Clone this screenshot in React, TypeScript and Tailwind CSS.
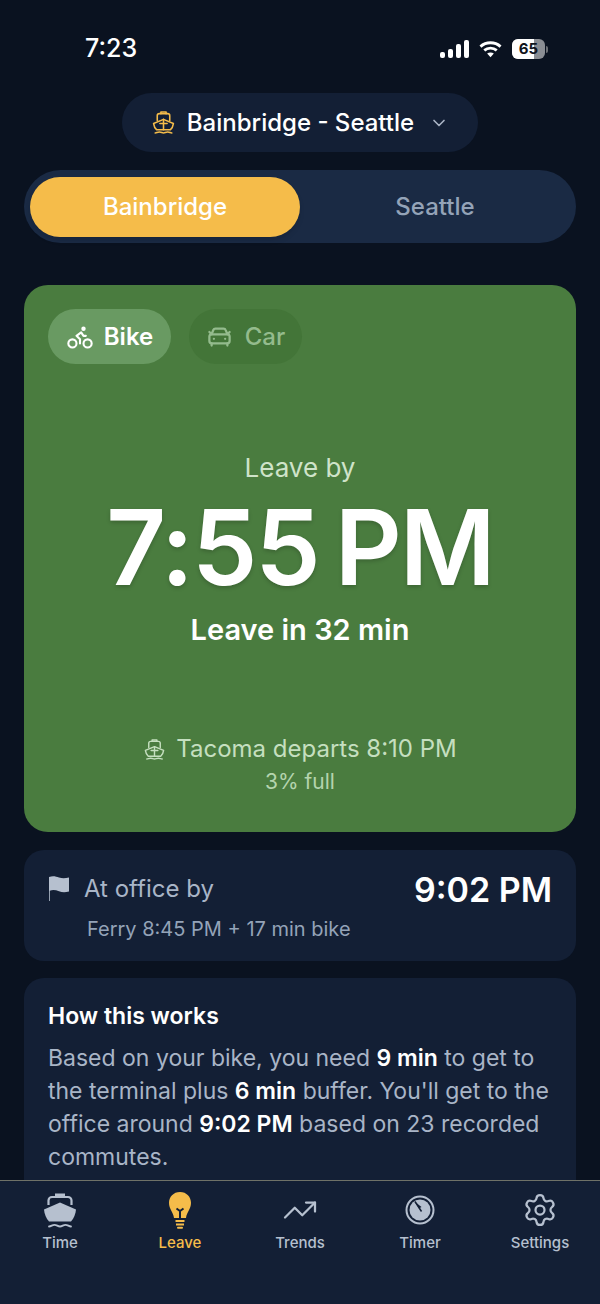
import { Bike, CarFront, ChevronDown, Settings, TrendingUp } from "lucide-react";

function FerryOutline({ className }: { className?: string }) {
  return (
    <svg viewBox="0 0 24 24" fill="none" stroke="currentColor" strokeWidth="1.5" strokeLinecap="round" strokeLinejoin="round" className={className}>
      <path d="M9.5 3.5V2h5v1.500" />
      <path d="M6 10V5.500a2 2 0 0 1 2-2h8a2 2 0 0 1 2 2V10" />
      <path d="M2.500 13 12 9l9.500 4c-.3 2.500-1.300 4.500-3 6H5.500c-1.700-1.500-2.700-3.500-3-6Z" />
      <path d="M12 9v10M8.500 13h7" />
      <path d="M4 22c1.500 0 2-.9 4-.9s2.500.9 4 .9 2-.9 4-.9 2.500.9 4 .9" />
    </svg>
  );
}

function FerrySolid({ className }: { className?: string }) {
  return (
    <svg viewBox="0 0 34 36" fill="none" className={className}>
      <path d="M12 4V1.500h10V4" fill="currentColor" />
      <path d="M5.500 13V8.500A3.500 3.500 0 0 1 9 5h16a3.500 3.500 0 0 1 3.500 3.500V13" stroke="currentColor" strokeWidth="2.200" />
      <path d="M1 17.500 17 10.500l16 7c-.3 4.500-2.200 9-5 12H6c-2.800-3-4.700-7.500-5-12Z" fill="currentColor" />
      <path d="M6 34.500c2.200 0 3.200-1.700 5.500-1.700s3.200 1.700 5.500 1.700 3.200-1.700 5.500-1.700 3.300 1.700 5.500 1.700" stroke="currentColor" strokeWidth="1.800" strokeLinecap="round" />
    </svg>
  );
}

function Bulb({ className }: { className?: string }) {
  return (
    <svg viewBox="0 0 24 38" className={className} fill="none">
      <path d="M12 1C5.400 1 1 6 1 11.800c0 6.200 4.300 9.200 5 15.200h12c.7-6 5-9 5-15.200C23 6 18.600 1 12 1Z" fill="#f5bc4a" />
      <path d="M8.500 17.500 12 20l3.500-2.500M12 20v7" stroke="#131f35" strokeWidth="2" />
      <path d="M7.500 30h9M8 33.500h8" stroke="#f5bc4a" strokeWidth="2.200" />
      <path d="M10 36.800h4" stroke="#f5bc4a" strokeWidth="2" strokeLinecap="round" />
    </svg>
  );
}

function TimerDial({ className }: { className?: string }) {
  return (
    <svg viewBox="0 0 30 30" className={className} fill="none">
      <circle cx="15" cy="15" r="13.500" stroke="currentColor" strokeWidth="2" />
      <circle cx="15" cy="15" r="10.500" fill="currentColor" />
      <path d="M9.500 6.500 14 13.500l2.500-1.500Z" fill="#131f35" />
      <path d="M10 6.500 16.500 16.500" stroke="#131f35" strokeWidth="1.500" />
    </svg>
  );
}

function StatusBar() {
  return (
    <div className="h-[93px] shrink-0 flex items-start justify-between pt-[33px] pl-[85px] pr-[52px]">
      <span className="text-[25px] leading-[31px] font-medium text-white">7:23</span>
      <div className="flex items-center gap-[10px] pt-[6px]">
        <div className="flex items-end gap-[3px] h-[18px]">
          <div className="w-[5px] h-[6px] rounded-[2px] bg-white" />
          <div className="w-[5px] h-[9px] rounded-[2px] bg-white" />
          <div className="w-[5px] h-[14px] rounded-[2px] bg-white" />
          <div className="w-[5px] h-[18px] rounded-[2px] bg-white" />
        </div>
        <svg viewBox="0 0 24 18" className="w-[23px] h-[18px]" fill="none" stroke="#fff" strokeWidth="3">
          <path d="M1.500 6.500c6-5.300 15-5.300 21 0" />
          <path d="M5.500 10.500c3.800-3.200 9.200-3.200 13 0" />
          <path d="M12 17.500l-3.500-3.800c2-1.500 5-1.500 7 0Z" fill="#fff" stroke="none" />
        </svg>
        <div className="flex items-center">
          <div className="relative w-[33px] h-[20px] rounded-[6px] overflow-hidden bg-[#8a8d93] flex">
            <div className="w-[22px] bg-white" />
            <span className="absolute inset-0 text-center text-[15px] leading-[20px] font-bold text-[#10141c]">65</span>
          </div>
          <div className="w-[2px] h-[7px] ml-px rounded-r bg-[#6b6e74]" />
        </div>
      </div>
    </div>
  );
}

const tabs = [
  { label: "Time", icon: <FerrySolid className="w-[34px] h-[36px]" /> },
  { label: "Leave", icon: <Bulb className="w-[24px] h-[38px]" />, active: true },
  { label: "Trends", icon: <TrendingUp className="w-[36px] h-[36px]" strokeWidth={1.500} /> },
  { label: "Timer", icon: <TimerDial className="w-[30px] h-[30px]" /> },
  { label: "Settings", icon: <Settings className="w-[36px] h-[36px]" strokeWidth={1.500} /> },
];

export default function App() {
  return (
    <div className="w-[600px] h-[1304px] overflow-hidden flex flex-col bg-[#0a1220] font-['Inter',sans-serif] [font-feature-settings:'tnum'_0]">
      <StatusBar />

      <main className="flex-1 min-h-0 overflow-hidden px-6">
        {/* Route picker */}
        <div className="flex justify-center">
          <button className="w-[356px] h-[59px] rounded-full bg-[#131f35] flex items-center justify-center gap-[11px] text-white">
            <FerryOutline className="w-[25px] h-[25px] text-[#f5bc4a]" />
            <span className="text-[24px] font-medium">Bainbridge - Seattle</span>
            <ChevronDown className="w-[20px] h-[20px] ml-[4px] text-[#aab4c5]" />
          </button>
        </div>

        {/* Direction toggle */}
        <div className="mt-[18px] h-[73px] rounded-full bg-[#1a2a44] flex items-center px-[6px]">
          <div className="w-[270px] h-[60px] rounded-full bg-[#f5bc4a] shadow-md flex items-center justify-center text-[24px] font-medium text-white">
            Bainbridge
          </div>
          <div className="flex-1 text-center text-[24px] font-medium text-[#94a3b8]">Seattle</div>
        </div>

        {/* Leave card */}
        <section className="mt-[42px] h-[547px] rounded-[24px] bg-[#4a7c3f] flex flex-col items-center">
          <div className="self-start flex gap-[18px] pt-6 pl-6">
            <div className="h-[55px] w-[123px] rounded-full bg-[#699a62] flex items-center justify-center gap-[10px] text-white">
              <Bike className="w-[28px] h-[28px]" strokeWidth={1.800} />
              <span className="text-[24px] font-semibold">Bike</span>
            </div>
            <div className="h-[55px] w-[113px] rounded-full bg-[#437538] flex items-center justify-center gap-[12px] text-[#94bb8d]">
              <CarFront className="w-[27px] h-[27px]" />
              <span className="text-[24px] font-medium">Car</span>
            </div>
          </div>
          <div className="mt-[88px] text-[26px] leading-[32px] text-[#cfe3c9]">Leave by</div>
          <div className="mt-[8px] text-[104px] leading-[110px] font-semibold text-white tracking-[-2px] [text-shadow:0_2px_4px_rgba(0,0,0,0.2)]">
            7:55<span className="ml-[16px]">PM</span>
          </div>
          <div className="mt-[10px] text-[29px] leading-[36px] font-semibold text-white">Leave in 32 min</div>
          <div className="mt-[86px] flex items-center gap-[10px] text-[24px] leading-[30px] text-[#c5dfbf]">
            <FerryOutline className="w-[23px] h-[23px]" />
            <span>Tacoma departs 8:10 PM</span>
          </div>
          <div className="mt-[4px] text-[21px] leading-[28px] text-[#b5d4ae]">3% full</div>
        </section>

        {/* Arrival */}
        <section className="mt-[18px] h-[111px] rounded-[20px] bg-[#131f35] px-6 pt-[20px] flex justify-between">
          <div>
            <div className="flex items-center gap-[14px]">
              <svg viewBox="0 0 22 26" className="w-[22px] h-[26px] text-[#b6c0cf]" fill="currentColor">
                <path d="M1 1c4-1.500 7-.5 10 .5s6 1 10 0v14c-4 1-7 .8-10-.2s-6-1.800-9.200-.5V25H1Z" />
              </svg>
              <span className="text-[24px] leading-[38px] text-[#a9b5c7]">At office by</span>
            </div>
            <div className="mt-[8px] ml-[39px] text-[20px] leading-[26px] text-[#94a3b8]">Ferry 8:45 PM + 17 min bike</div>
          </div>
          <div className="text-[34px] leading-[40px] font-semibold text-white">9:02 PM</div>
        </section>

        {/* Explainer */}
        <section className="mt-[17px] h-[260px] rounded-[20px] bg-[#131f35] px-6 pt-[23px]">
          <h2 className="text-[23px] leading-[30px] font-semibold text-white">How this works</h2>
          <p className="mt-[11px] text-[23px] leading-[33px] text-[#a9b5c7]">
            Based on your bike, you need <b className="font-semibold text-white">9 min</b> to get to the terminal plus{" "}
            <b className="font-semibold text-white">6 min</b> buffer. You'll get to the office around{" "}
            <b className="font-semibold text-white">9:02 PM</b> based on 23 recorded commutes.
          </p>
        </section>
      </main>

      {/* Tab bar */}
      <nav className="h-[124px] shrink-0 grid grid-cols-5 bg-[#131f35] border-t border-[#6f7268] pt-[10px] px-0">
        {tabs.map((tab) => (
          <div
            key={tab.label}
            className={`flex flex-col items-center ${tab.active ? "text-[#f5bc4a]" : "text-[#b6c0cf]"}`}
          >
            <div className="h-[38px] flex items-center justify-center">{tab.icon}</div>
            <span className="mt-[4px] text-[15px] leading-[20px] font-medium">{tab.label}</span>
          </div>
        ))}
      </nav>
    </div>
  );
}
